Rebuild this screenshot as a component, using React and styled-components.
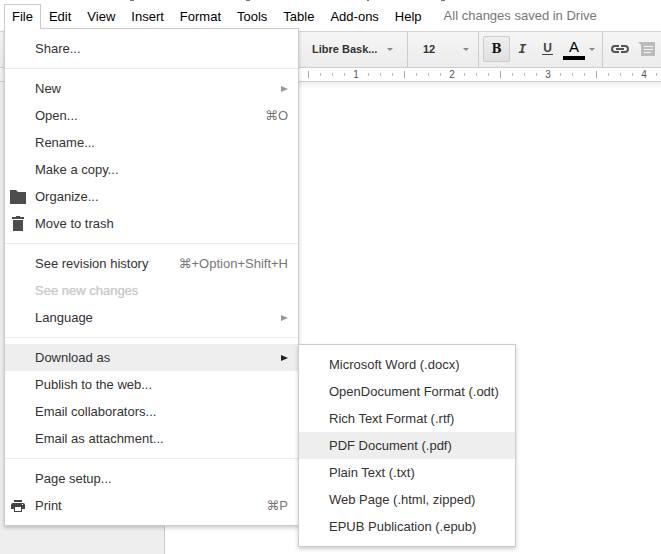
import React from 'react';
import styled, { createGlobalStyle, css } from 'styled-components';

const GlobalStyle = createGlobalStyle`
  * {
    box-sizing: border-box;
  }
  body {
    margin: 0;
    overflow: hidden;
    background: #fff;
    font-family: 'Liberation Sans', Arial, sans-serif;
    font-size: 13px;
    color: #333;
  }
  button, select {
    margin: 0;
    border: 0;
    background: none;
    font: inherit;
    color: inherit;
  }
`;

const Page = styled.div`
  display: flex;
  flex-direction: column;
  min-height: 100vh;
`;

const TitleStrip = styled.div`
  height: 4px;
  overflow: hidden;
  svg {
    display: block;
  }
`;

const MenuBar = styled.nav`
  display: flex;
  height: 27px;
  padding-left: 4px;
`;

const MenuSlot = styled.div`
  position: relative;
`;

const MenuTab = styled.button`
  height: 25px;
  padding: 0 7px;
  border: 1px solid transparent;
  color: #000;
  white-space: nowrap;
  ${({ $open }) =>
    $open &&
    css`
      position: relative;
      z-index: 3;
      padding-bottom: 2px;
      border-color: #ccc;
      border-bottom: 0;
      background: #fff;
    `}
`;

const SaveState = styled.span`
  padding-left: 14px;
  line-height: 24px;
  color: #777;
  white-space: nowrap;
`;

const MenuList = styled.ul`
  position: absolute;
  top: 24px;
  left: 0;
  z-index: 2;
  width: 295px;
  margin: 0;
  padding: 6px 0;
  border: 1px solid #ccc;
  background: #fff;
  box-shadow: 0 2px 4px rgba(0, 0, 0, 0.2);
  list-style: none;
`;

const SubMenuList = styled(MenuList)`
  top: 0;
  left: 293px;
  width: 218px;
`;

const MenuRow = styled.li`
  position: relative;
`;

const MenuButton = styled.button`
  display: flex;
  align-items: center;
  width: 100%;
  height: 27px;
  padding: 0 10px 0 30px;
  background: ${({ $active }) => ($active ? '#eee' : 'transparent')};
  text-align: left;
  white-space: nowrap;
  &:disabled {
    color: #ccc;
    text-shadow: 0 0 1px #ccc;
  }
`;

const ItemIcon = styled.span`
  display: flex;
  justify-content: center;
  width: 18px;
  margin-left: -26px;
  margin-right: 8px;
`;

const Shortcut = styled.span`
  margin-left: auto;
  color: #777;
  font-family: 'Liberation Sans', 'DejaVu Sans', sans-serif;
`;

const Arrow = styled.svg`
  margin-left: auto;
  fill: ${({ $active }) => ($active ? '#222' : '#999')};
`;

const Separator = styled.li`
  margin: 6px 0;
  border-top: 1px solid #ebebeb;
`;

const Toolbar = styled.div`
  display: flex;
  align-items: stretch;
  height: 37px;
  padding: 0 0 1px 297px;
  border-top: 1px solid #d5d5d5;
  border-bottom: 1px solid #ccc;
  background: linear-gradient(#f5f5f5, #ececec);
  overflow: hidden;
`;

const ToolGroup = styled.div`
  display: flex;
  flex: none;
  align-items: center;
  height: 35px;
  padding: 0 4px 1px;
  border-right: 1px solid #ccc;
  &:last-child {
    border-right: 0;
  }
`;

const Picker = styled.label`
  display: flex;
  align-items: center;
  width: ${({ $width }) => $width}px;
  padding: 0 ${({ $end }) => $end}px 0 11px;
  select {
    flex: 1;
    min-width: 0;
    padding: 0;
    appearance: none;
    font-size: 11px;
    font-weight: bold;
    color: #333;
  }
`;

const ToolButton = styled.button`
  display: flex;
  align-items: center;
  justify-content: center;
  width: ${({ $width = 25 }) => $width}px;
  height: 26px;
  padding: 0;
  border: 1px solid transparent;
  border-radius: 2px;
  color: #444;
  ${({ $pressed }) =>
    $pressed &&
    css`
      border-color: #ccc;
      background: linear-gradient(#eee, #e0e0e0);
      color: #111;
    `}
`;

const Glyph = styled.span`
  font-family: 'DejaVu Serif', serif;
  font-size: 12px;
  font-weight: bold;
  line-height: 14px;
`;

const ItalicGlyph = styled(Glyph)`
  font-family: 'DejaVu Sans Mono', monospace;
  font-size: 13px;
  font-style: italic;
`;

const UnderlineGlyph = styled.span`
  padding: 0 1px;
  border-bottom: 1px solid #444;
  font-size: 12px;
  font-weight: bold;
  line-height: 11px;
`;

const ColorButton = styled(ToolButton)`
  gap: 4px;
`;

const ColorGlyph = styled.span`
  width: 22px;
  border-bottom: 4px solid #000;
  color: #000;
  font-size: 15px;
  line-height: 18px;
`;

const Ruler = styled.div`
  display: flex;
  height: 14px;
  padding-left: 254px;
  border-bottom: 1px solid #ccc;
  background: linear-gradient(90deg, #f1f1f1 164px, #fff 164px);
  overflow: hidden;
`;

const RulerMark = styled.span`
  flex: none;
  width: 12px;
  color: #555;
  font-size: 10px;
  line-height: 13px;
  text-align: center;
  &::before {
    content: '';
    display: ${({ $size }) => ($size ? 'block' : 'none')};
    width: 1px;
    height: ${({ $size }) => $size}px;
    margin: ${({ $size }) => (13 - $size) / 2}px 0 0 6px;
    background: ${({ $size }) => ($size > 3 ? '#aaa' : '#bbb')};
  }
`;

const Canvas = styled.main`
  flex: 1;
  display: flex;
  padding-left: 164px;
  background: #eee;
`;

const Sheet = styled.div`
  flex: 1;
  border-left: 1px solid #ccc;
  background: linear-gradient(#eee, #fff 7px);
`;

const FolderIcon = () => (
  <svg width="16" height="14" viewBox="0 0 16 14" fill="#4d4d4d">
    <path d="M0 0h6l2 2h8v12H0z" />
  </svg>
);

const TrashIcon = () => (
  <svg width="12" height="15" viewBox="0 0 12 15" fill="#4d4d4d">
    <path d="M4 0h4v1h4v2H0V1h4zM1 4h10v11H1z" />
  </svg>
);

const PrintIcon = () => (
  <svg width="14" height="12" viewBox="0 0 14 12">
    <path
      fill="#444"
      fillRule="evenodd"
      d="M3 0h8v2H3zM2 3h10q2 0 2 2v4h-3v3H3V9H0V5q0-2 2-2zM4 7v4h6V7zM11 4v1h1V4z"
    />
  </svg>
);

const LinkIcon = () => (
  <svg width="18" height="8" viewBox="0 0 18 8" fill="none">
    <path
      d="M8 1H4a3 3 0 0 0 0 6h4M10 1h4a3 3 0 0 1 0 6h-4M5 4h8"
      stroke="#555"
      strokeWidth="2"
    />
  </svg>
);

const CommentIcon = () => (
  <svg width="17" height="14" viewBox="0 0 17 14">
    <path d="M0 0h17v14H3V3z" fill="#bbb" />
    <path d="M6 4.5h9M6 7.5h9M6 10.5h7" stroke="#f4f4f4" />
  </svg>
);

const Caret = () => (
  <svg width="6" height="3" viewBox="0 0 6 3" fill="#888">
    <path d="M0 0h6L3 3z" />
  </svg>
);

const formats = [
  'Microsoft Word (.docx)',
  'OpenDocument Format (.odt)',
  'Rich Text Format (.rtf)',
  'PDF Document (.pdf)',
  'Plain Text (.txt)',
  'Web Page (.html, zipped)',
  'EPUB Publication (.epub)',
];

const fileMenu = [
  [{ label: 'Share...' }],
  [
    { label: 'New', arrow: true },
    { label: 'Open...', keys: '⌘O' },
    { label: 'Rename...' },
    { label: 'Make a copy...' },
    { label: 'Organize...', Icon: FolderIcon },
    { label: 'Move to trash', Icon: TrashIcon },
  ],
  [
    { label: 'See revision history', keys: '⌘+Option+Shift+H' },
    { label: 'See new changes', disabled: true },
    { label: 'Language', arrow: true },
  ],
  [
    { label: 'Download as', arrow: true, children: formats },
    { label: 'Publish to the web...' },
    { label: 'Email collaborators...' },
    { label: 'Email as attachment...' },
  ],
  [
    { label: 'Page setup...' },
    { label: 'Print', keys: '⌘P', Icon: PrintIcon },
  ],
];

const tabs = [
  'Edit',
  'View',
  'Insert',
  'Format',
  'Tools',
  'Table',
  'Add-ons',
  'Help',
];

// eight marks to the inch
const rulerMarks = Array.from({ length: 40 }, (_, i) => i);

const MenuItem = ({ label, keys, arrow, disabled, Icon, children }) => (
  <MenuRow role="none">
    <MenuButton role="menuitem" disabled={disabled} $active={!!children}>
      {Icon && (
        <ItemIcon>
          <Icon />
        </ItemIcon>
      )}
      {label}
      {keys && <Shortcut>{keys}</Shortcut>}
      {arrow && (
        <Arrow width="8" height="6" viewBox="0 0 8 6" $active={!!children}>
          <path d="M1 0l7 3-7 3z" />
        </Arrow>
      )}
    </MenuButton>
    {children && (
      <SubMenuList role="menu" aria-label={label}>
        {children.map((name) => (
          <MenuRow role="none" key={name}>
            <MenuButton role="menuitem" $active={name.startsWith('PDF')}>
              {name}
            </MenuButton>
          </MenuRow>
        ))}
      </SubMenuList>
    )}
  </MenuRow>
);

const FileMenu = () => (
  <MenuList role="menu" aria-label="File">
    {fileMenu.map((group, i) => (
      <React.Fragment key={group[0].label}>
        {i > 0 && <Separator role="separator" />}
        {group.map((item) => (
          <MenuItem key={item.label} {...item} />
        ))}
      </React.Fragment>
    ))}
  </MenuList>
);

const App = () => (
  <Page>
    <GlobalStyle />
    <TitleStrip>
      {/* tail of the document title scrolled out above the bar */}
      <svg width="460" height="1" viewBox="0 0 460 1" fill="#777">
        <path d="M130 0h4v1h-4zM246 0h4v1h-4zM367 0h2v1h-2zM441 0h4v1h-4z" />
      </svg>
    </TitleStrip>
    <MenuBar>
      <MenuSlot>
        <MenuTab $open aria-haspopup="menu" aria-expanded="true">
          File
        </MenuTab>
        <FileMenu />
      </MenuSlot>
      {tabs.map((tab) => (
        <MenuTab key={tab}>{tab}</MenuTab>
      ))}
      <SaveState>All changes saved in Drive</SaveState>
    </MenuBar>
    <Toolbar role="toolbar">
      <ToolGroup>
        <Picker $width={102} $end={10}>
          <select aria-label="Font">
            <option>Libre Bask...</option>
          </select>
          <Caret />
        </Picker>
      </ToolGroup>
      <ToolGroup>
        <Picker $width={62} $end={5}>
          <select aria-label="Font size">
            <option>12</option>
          </select>
          <Caret />
        </Picker>
      </ToolGroup>
      <ToolGroup>
        <ToolButton $pressed $width={27} aria-label="Bold" aria-pressed="true">
          <Glyph>B</Glyph>
        </ToolButton>
        <ToolButton aria-label="Italic">
          <ItalicGlyph>I</ItalicGlyph>
        </ToolButton>
        <ToolButton aria-label="Underline">
          <UnderlineGlyph>U</UnderlineGlyph>
        </ToolButton>
        <ColorButton $width={38} aria-label="Text color">
          <ColorGlyph>A</ColorGlyph>
          <Caret />
        </ColorButton>
      </ToolGroup>
      <ToolGroup>
        <ToolButton $width={26} aria-label="Insert link">
          <LinkIcon />
        </ToolButton>
        <ToolButton $width={27} aria-label="Add comment" disabled>
          <CommentIcon />
        </ToolButton>
      </ToolGroup>
    </Toolbar>
    <Ruler>
      {rulerMarks.map((i) =>
        i > 0 && i % 8 === 0 ? (
          <RulerMark key={i}>{i / 8}</RulerMark>
        ) : (
          <RulerMark key={i} $size={i % 4 === 0 ? 7 : 3} />
        )
      )}
    </Ruler>
    <Canvas>
      <Sheet />
    </Canvas>
  </Page>
);

export default App;
